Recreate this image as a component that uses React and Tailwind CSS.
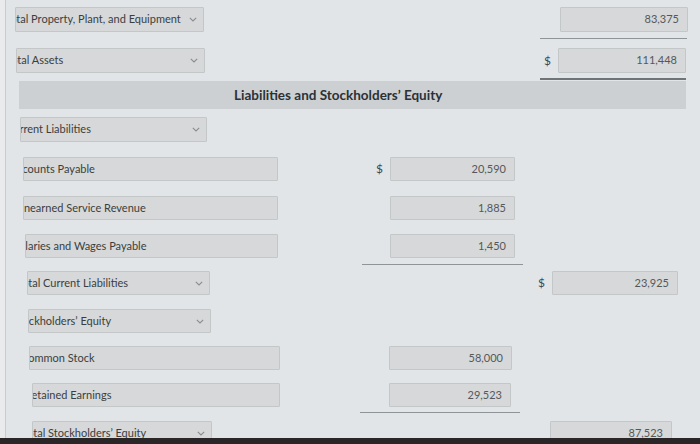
import React from "react";

function Chevron() {
  return (
    <svg width="8" height="5" viewBox="0 0 8 5" className="shrink-0 mr-[6px]">
      <path d="M0.8 0.8 L4 4 L7.2 0.8" fill="none" stroke="#8a8d8f" strokeWidth="1.1" />
    </svg>
  );
}

function Box({ className, indent, text, select }) {
  return (
    <div className={"shrink-0 h-full flex items-center overflow-hidden bg-[#d6d8d9] border border-[#c4c7c8] rounded-[1px] " + className}>
      <span className={"flex-1 whitespace-nowrap overflow-hidden text-[11px] text-[#3b3e40] " + indent}>{text}</span>
      {select ? <Chevron /> : null}
    </div>
  );
}

function Num({ className, value }) {
  return (
    <div className={"shrink-0 h-full flex items-center justify-end pr-[8px] bg-[#d6d8d9] border border-[#c4c7c8] rounded-[1px] text-[11px] text-[#54585b] " + className}>
      {value}
    </div>
  );
}

function Dollar({ className }) {
  return (
    <div className={"shrink-0 h-full flex items-center justify-end pr-[7px] text-[12px] text-[#44484b] " + className}>$</div>
  );
}

export default function App() {
  return (
    <div className="w-[700px] h-[444px] overflow-hidden bg-[#e2e5e7] font-['Lato','Open_Sans',sans-serif] flex flex-col">
      <div className="h-[438px] shrink-0 overflow-hidden flex flex-col border-l-[5px] border-[#e9ebec]">
        <div className="flex flex-col border-l border-[#c9cccd] h-full">
          {/* Row 1 */}
          <div className="flex shrink-0 h-[25px] mt-[7px]">
            <Box className="ml-[9px] w-[189px]" indent="[text-indent:-11px]" text="Total Property, Plant, and Equipment" select />
            <Num className="ml-[356px] w-[128px]" value="83,375" />
          </div>
          <div className="shrink-0 mt-[6px] ml-[534px] w-[147px] h-[1px] bg-[#8f9496]" />
          {/* Row 2 */}
          <div className="flex shrink-0 h-[25px] mt-[9px]">
            <Box className="ml-[10px] w-[189px]" indent="[text-indent:-11px]" text="Total Assets" select />
            <Dollar className="w-[353px]" />
            <Num className="w-[128px]" value="111,448" />
          </div>
          <div className="shrink-0 mt-[5px] ml-[534px] w-[146px] h-[2px] bg-[#6f7476]" />
          {/* Header */}
          <div className="shrink-0 mt-[1px] ml-[13px] w-[667px] h-[28px] bg-[#cdd0d2] flex items-center pl-[215px]">
            <span className="text-[13.5px] font-bold text-[#2b3135]">Liabilities and Stockholders’ Equity</span>
          </div>
          {/* Current Liabilities */}
          <div className="flex shrink-0 h-[25px] mt-[8px]">
            <Box className="ml-[14px] w-[187px]" indent="[text-indent:-15px]" text="Current Liabilities" select />
          </div>
          {/* Accounts Payable */}
          <div className="flex shrink-0 h-[24px] mt-[15px]">
            <Box className="ml-[17px] w-[255px]" indent="[text-indent:-14px]" text="Accounts Payable" />
            <Dollar className="w-[112px]" />
            <Num className="w-[125px]" value="20,590" />
          </div>
          {/* Unearned */}
          <div className="flex shrink-0 h-[24px] mt-[15px]">
            <Box className="ml-[17px] w-[255px]" indent="[text-indent:-8px]" text="Unearned Service Revenue" />
            <Num className="ml-[112px] w-[125px]" value="1,885" />
          </div>
          {/* Salaries */}
          <div className="flex shrink-0 h-[24px] mt-[14px]">
            <Box className="ml-[19px] w-[253px]" indent="[text-indent:-12px]" text="Salaries and Wages Payable" />
            <Num className="ml-[112px] w-[125px]" value="1,450" />
          </div>
          <div className="shrink-0 mt-[6px] ml-[356px] w-[161px] h-[1px] bg-[#8f9496]" />
          {/* Total Current Liabilities */}
          <div className="flex shrink-0 h-[24px] mt-[6px]">
            <Box className="ml-[21px] w-[183px]" indent="[text-indent:-11px]" text="Total Current Liabilities" select />
            <Dollar className="w-[342px]" />
            <Num className="w-[126px]" value="23,925" />
          </div>
          {/* Stockholders' Equity */}
          <div className="flex shrink-0 h-[24px] mt-[14px]">
            <Box className="ml-[22px] w-[183px]" indent="[text-indent:-16px]" text="Stockholders’ Equity" select />
          </div>
          {/* Common Stock */}
          <div className="flex shrink-0 h-[24px] mt-[13px]">
            <Box className="ml-[23px] w-[251px]" indent="[text-indent:-9px]" text="Common Stock" />
            <Num className="ml-[109px] w-[123px]" value="58,000" />
          </div>
          {/* Retained Earnings */}
          <div className="flex shrink-0 h-[24px] mt-[13px]">
            <Box className="ml-[26px] w-[248px]" indent="[text-indent:-8px]" text="Retained Earnings" />
            <Num className="ml-[109px] w-[122px]" value="29,523" />
          </div>
          <div className="shrink-0 mt-[5px] ml-[354px] w-[160px] h-[1px] bg-[#8f9496]" />
          {/* Total Stockholders' Equity */}
          <div className="flex shrink-0 h-[24px] mt-[8px]">
            <Box className="ml-[26px] w-[180px]" indent="[text-indent:-11px]" text="Total Stockholders’ Equity" select />
            <Num className="ml-[338px] w-[122px]" value="87,523" />
          </div>
        </div>
      </div>
      <div className="h-[6px] shrink-0 bg-[#2a2627]" />
    </div>
  );
}
